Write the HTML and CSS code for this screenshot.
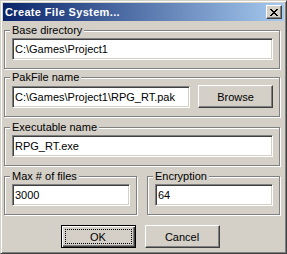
FILE: index.html
```html
<!DOCTYPE html>
<html>
<head>
    <title>Create File System...</title>
    <link rel="stylesheet" href="styles.css">
</head>
<body>
    <div class="window">
        <div class="titlebar">
            <span class="title">Create File System...</span>
            <button class="close" aria-label="Close">
                <svg width="8" height="7" viewBox="0 0 8 7" shape-rendering="crispEdges">
                    <path fill="#000" d="M0 0h2v1H0zM6 0h2v1H6zM1 1h2v1H1zM5 1h2v1H5zM2 2h4v1H2zM3 3h2v1H3zM2 4h4v1H2zM1 5h2v1H1zM5 5h2v1H5zM0 6h2v1H0zM6 6h2v1H6z"/>
                </svg>
            </button>
        </div>

        <div class="dialog">
            <fieldset class="group first">
                <legend>Base directory</legend>
                <input class="edit" type="text" value="C:\Games\Project1">
            </fieldset>

            <fieldset class="group pak">
                <legend>PakFile name</legend>
                <div class="row">
                    <input class="edit" type="text" value="C:\Games\Project1\RPG_RT.pak">
                    <button class="btn browse">Browse</button>
                </div>
            </fieldset>

            <fieldset class="group exe">
                <legend>Executable name</legend>
                <input class="edit" type="text" value="RPG_RT.exe">
            </fieldset>

            <div class="pair">
                <fieldset class="group">
                    <legend>Max # of files</legend>
                    <input class="edit" type="text" value="3000">
                </fieldset>
                <fieldset class="group">
                    <legend>Encryption</legend>
                    <input class="edit" type="text" value="64">
                </fieldset>
            </div>

            <div class="actions">
                <button class="btn default"><span class="focus">OK</span></button>
                <button class="btn">Cancel</button>
            </div>
        </div>
    </div>
</body>
</html>
```

FILE: styles.css
```css
body {
  margin: 0;
  padding: 0;
  background-color: #d4d0c8;
  font-family: "Liberation Sans", Arial, sans-serif;
  font-size: 11px;
  color: #000;
}
.window {
  box-sizing: border-box;
  width: 287px;
  height: 254px;
  padding: 2px;
  background-color: #d4d0c8;
  border: 1px solid;
  border-color: #d4d0c8 #404040 #404040 #d4d0c8;
  box-shadow: inset 1px 1px #fff, inset -1px -1px #808080;
}
.titlebar {
  display: flex;
  align-items: center;
  height: 18px;
  padding-left: 2px;
  background: linear-gradient(to right, #0a246a, #a6caf0);
}
.title {
  flex: 1;
  color: white;
  font-weight: bold;
  font-size: 11px;
  letter-spacing: 0.35px;
  line-height: 18px;
}
.close {
  display: flex;
  align-items: center;
  justify-content: center;
  width: 16px;
  height: 14px;
  margin-right: 2px;
  padding: 0;
  background-color: #d4d0c8;
  border: 1px solid;
  border-color: #fff #404040 #404040 #fff;
  box-shadow: inset -1px -1px #808080;
}
.dialog {
  padding: 0 4px 0 1px;
}
.group {
  margin: 4px 0 0 0;
  padding: 1px 6px 8px 7px;
  border: 1px solid #808080;
  box-shadow: inset 1px 1px #fff, 1px 1px #fff;
  min-width: 0;
}
.group legend {
  margin-left: -2px;
  padding: 0 2px;
  line-height: 13px;
  background-color: #d4d0c8;
}
.group.first {
  margin-top: 3px;
}
.group.pak {
  margin-top: 2px;
}
.edit {
  box-sizing: border-box;
  display: block;
  width: 100%;
  height: 22px;
  margin: 0;
  padding: 0 0 0 2px;
  font-family: "Liberation Sans", Arial, sans-serif;
  font-size: 11px;
  color: #000;
  background-color: #fff;
  border: 1px solid;
  border-color: #808080 #fff #fff #808080;
  box-shadow: inset 1px 1px #404040, inset -1px -1px #d4d0c8;
  outline: none;
}
.row {
  display: flex;
  align-items: center;
  gap: 8px;
}
.row .edit {
  flex: 1;
  width: auto;
}
.pair {
  display: flex;
  gap: 10px;
}
.pair .group {
  flex: 1;
}
.btn {
  box-sizing: border-box;
  display: flex;
  align-items: center;
  justify-content: center;
  width: 75px;
  height: 23px;
  margin: 0;
  padding: 0;
  font-family: "Liberation Sans", Arial, sans-serif;
  font-size: 11px;
  color: #000;
  background-color: #d4d0c8;
  border: 1px solid;
  border-color: #fff #404040 #404040 #fff;
  box-shadow: inset -1px -1px #808080;
}
.actions {
  display: flex;
  justify-content: center;
  gap: 9px;
  margin-top: 10px;
  padding-right: 4px;
}
.btn.default {
  padding: 3px;
  border: 1px solid #000;
  box-shadow: inset 1px 1px #fff, inset -1px -1px #404040, inset -2px -2px #808080;
}
.focus {
  flex: 1;
  align-self: stretch;
  display: flex;
  align-items: center;
  justify-content: center;
  border: 1px dotted #000;
}
```
